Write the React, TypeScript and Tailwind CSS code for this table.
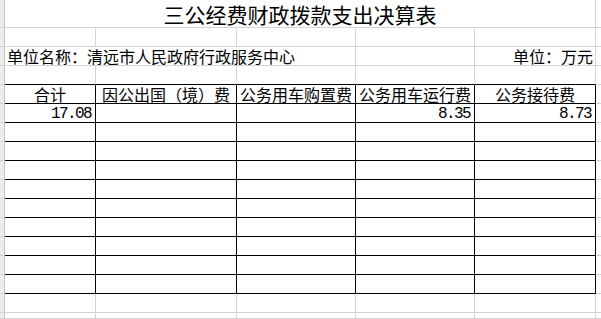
import * as React from "react"

const grid = "border-[#d4d4d4]"
const cjk = "font-['Noto_Sans_CJK_SC','Noto_Sans',sans-serif]"
const mono = "font-['Liberation_Mono',monospace] tracking-[-1.6px]"

function Strip() {
  return <div className="bg-[#ececec] border-r border-b border-r-[#c4c4c4] border-b-[#d4d4d4]" />
}

function Tail() {
  return <div className={`border-b ${grid}`} />
}

function Cell({
  span = 1,
  className = "",
  children,
}: {
  span?: number
  className?: string
  children?: React.ReactNode
}) {
  const spans: Record<number, string> = {
    1: "col-span-1",
    3: "col-span-3",
    5: "col-span-5",
  }
  return (
    <div className={`${spans[span]} flex items-end overflow-visible whitespace-nowrap border-r border-b ${className}`}>
      {children}
    </div>
  )
}

const headers = ["合计", "因公出国（境）费", "公务用车购置费", "公务用车运行费", "公务接待费"]
const rows: string[][] = [
  ["17.08", "", "", "8.35", "8.73"],
  ...Array.from({ length: 9 }, () => ["", "", "", "", ""]),
]

export default function App() {
  return (
    <main className={`w-[601px] h-[319px] overflow-hidden bg-white text-black ${cjk}`}>
      <div className="grid grid-cols-[5px_91px_141px_119px_119px_121px_5px] grid-rows-[28px_repeat(15,19px)_6px]">
        {/* Title */}
        <Strip />
        <Cell span={5} className={`${grid} justify-center pb-[1px]`}>
          <span className="text-[21px] leading-[24px]">三公经费财政拨款支出决算表</span>
        </Cell>
        <Tail />

        {/* Blank row */}
        <Strip />
        {[0, 1, 2, 3, 4].map((i) => (
          <Cell key={i} className={grid} />
        ))}
        <Tail />

        {/* Unit row */}
        <Strip />
        <Cell span={3} className={`${grid} pl-[2px]`}>
          <span className="text-[16px] leading-[18px]">单位名称：清远市人民政府行政服务中心</span>
        </Cell>
        <Cell className={grid} />
        <Cell className={`${grid} justify-end pr-[2px]`}>
          <span className="text-[16px] leading-[18px]">单位：万元</span>
        </Cell>
        <Tail />

        {/* Row above table */}
        <Strip />
        {[0, 1, 2, 3, 4].map((i) => (
          <Cell key={i} className="border-r-[#d4d4d4] border-b-black" />
        ))}
        <Tail />

        {/* Header */}
        <Strip />
        {headers.map((h) => (
          <Cell key={h} className="border-black justify-center">
            <span className="text-[16px] leading-[18px]">{h}</span>
          </Cell>
        ))}
        <Tail />

        {/* Data */}
        {rows.map((r, ri) => (
          <React.Fragment key={ri}>
            <Strip />
            {r.map((v, ci) => (
              <Cell key={ci} className="border-black justify-end pr-[4px]">
                <span className={`${mono} text-[16px] leading-[16px]`}>{v}</span>
              </Cell>
            ))}
            <Tail />
          </React.Fragment>
        ))}

        {/* After table */}
        <Strip />
        {[0, 1, 2, 3, 4].map((i) => (
          <Cell key={i} className={grid} />
        ))}
        <Tail />

        <Strip />
        {[0, 1, 2, 3, 4].map((i) => (
          <Cell key={i} className={grid} />
        ))}
        <Tail />
      </div>
    </main>
  )
}
